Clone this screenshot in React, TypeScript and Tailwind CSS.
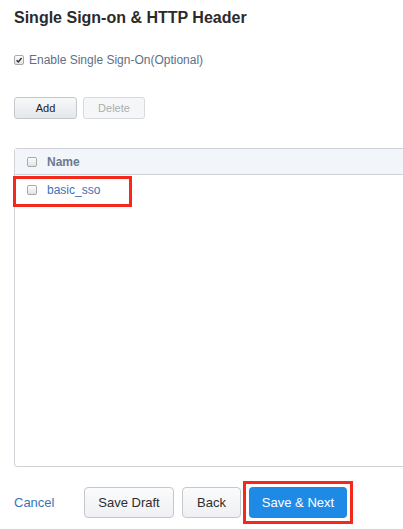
import React from "react";

function Box({ checked = false }: { checked?: boolean }) {
  return (
    <span className="flex h-[10px] w-[10px] items-center justify-center rounded-[2px] border border-[#a9a9a9] bg-gradient-to-b from-[#fdfdfd] to-[#e3e3e3]">
      {checked ? (
        <svg viewBox="0 0 10 10" className="h-[8px] w-[8px]">
          <path d="M2 5.2 4.1 7.4 8.2 2.4" fill="none" stroke="#333" strokeWidth="1.8" />
        </svg>
      ) : null}
    </span>
  );
}

export default function App() {
  return (
    <div className="relative h-[529px] w-[403px] overflow-hidden bg-white font-['Liberation_Sans',Arial,sans-serif]">
      <div className="flex flex-col pl-[14px]">
        <h1 className="mt-[8px] text-[16px] font-bold leading-[20px] text-[#2b2b2b]">
          Single Sign-on &amp; HTTP Header
        </h1>

        <label className="mt-[25px] flex items-center gap-[5px] text-[12px] leading-[14px] text-[#5e6f86]">
          <Box checked />
          Enable Single Sign-On(Optional)
        </label>

        <div className="mt-[30px] flex gap-[6px]">
          <button className="h-[22px] w-[63px] rounded-[3px] border border-[#c4c8ce] bg-gradient-to-b from-[#f7f8fa] to-[#e4e7eb] text-[11px] text-[#222]">
            Add
          </button>
          <button className="h-[22px] w-[62px] rounded-[3px] border border-[#d6d9dd] bg-[#f5f6f7] text-[11px] text-[#a9adb2]">
            Delete
          </button>
        </div>

        <div className="mt-[29px] flex h-[319px] w-[420px] shrink-0 flex-col rounded-l-[3px] border border-[#cfd2d6]">
          <div className="flex h-[26px] items-center border-b border-[#cfd2d6] bg-[#f2f5f9]">
            <span className="flex w-[32px] justify-center pl-[1px]">
              <Box />
            </span>
            <span className="text-[12px] font-bold text-[#6b7a8e]">Name</span>
          </div>
          <div className="relative flex h-[30px] items-center">
            <span className="flex w-[32px] justify-center pl-[1px]">
              <Box />
            </span>
            <span className="text-[12px] text-[#3b74b6]">basic_sso</span>
            <div className="pointer-events-none absolute left-[-2px] top-[1px] h-[31px] w-[119px] border-[3px] border-[#f5291b]" />
          </div>
        </div>

        <div className="mt-[14px] flex items-center">
          <a className="w-[70px] text-[13px] text-[#3b74b6]">Cancel</a>
          <button className="h-[31px] w-[90px] rounded-[4px] border border-[#c4c8ce] bg-gradient-to-b from-[#fafbfc] to-[#eef0f3] text-[13px] text-[#2e2e2e]">
            Save Draft
          </button>
          <button className="ml-[8px] h-[31px] w-[59px] rounded-[4px] border border-[#c4c8ce] bg-gradient-to-b from-[#fafbfc] to-[#eef0f3] text-[13px] text-[#2e2e2e]">
            Back
          </button>
          <div className="ml-[2px] border-[3px] border-[#f5291b] p-[3px]">
            <button className="h-[31px] w-[98px] rounded-[4px] bg-[#1f8ae6] text-[13px] text-white">
              Save &amp; Next
            </button>
          </div>
        </div>
      </div>
    </div>
  );
}
